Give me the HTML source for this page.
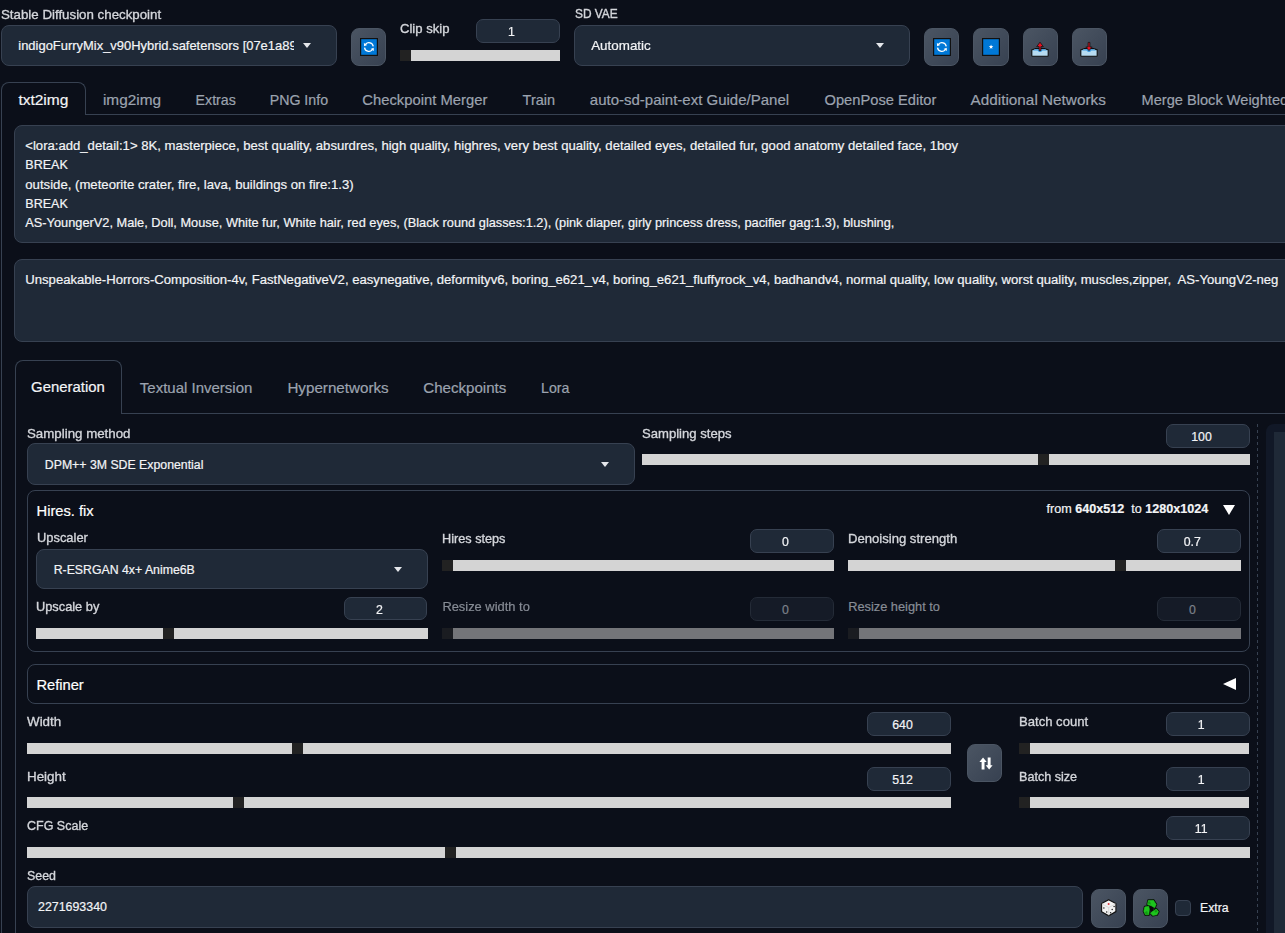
<!DOCTYPE html><html><head><meta charset="utf-8"><style>
html,body{margin:0;padding:0;}
body{width:1285px;height:933px;overflow:hidden;background:#0b0f19;position:relative;font-family:"Liberation Sans",sans-serif;}
.t{position:absolute;white-space:nowrap;line-height:1;-webkit-text-stroke:0.2px currentColor;}
.lb{-webkit-text-stroke:0.35px #d4d6db;will-change:transform;}
.b{position:absolute;box-sizing:border-box;}
.btn{position:absolute;box-sizing:border-box;border-radius:8px;background:linear-gradient(to bottom right,#4b5563,#374151);border:1px solid #4b5563;}
</style></head><body>

<div class="t lb" style="left:1.0px;top:7.7px;font-size:13.3px;color:#d4d6db;font-weight:normal;">Stable Diffusion checkpoint</div>
<div class="b" style="left:1.0px;top:25.0px;width:336.0px;height:41.0px;background:#1f2937;border:1px solid #374151;border-radius:8px;"></div>
<div class="t" style="left:18.3px;top:39.5px;font-size:12.95px;color:#f3f4f6;font-weight:normal;width:275.7px;overflow:hidden;padding-bottom:4px;white-space:nowrap;">indigoFurryMix_v90Hybrid.safetensors [07e1a89c8e]</div>
<div class="b" style="left:303px;top:43.0px;width:0;height:0;border-left:4.0px solid transparent;border-right:4.0px solid transparent;border-top:5px solid #e5e7eb"></div>
<div class="btn" style="left:351.0px;top:28.0px;width:35.0px;height:38.0px"></div>
<svg class="b" style="left:359.5px;top:38.2px" width="18" height="18" viewBox="0 0 18 18"><rect x="0.6" y="0.6" width="16.8" height="16.8" fill="#0078d7" stroke="#111" stroke-width="1.2"/><path d="M5.63 6.06 A4.4 4.4 0 0 1 13.26 8.39 M12.17 11.94 A4.4 4.4 0 0 1 4.54 9.61" fill="none" stroke="#fff" stroke-width="1.3"/><path d="M4.11 8.36 L3.90 4.93 L7.29 7.05 Z M13.69 9.64 L13.90 13.07 L10.51 10.95 Z" fill="#fff"/></svg>
<div class="t lb" style="left:400.0px;top:21.7px;font-size:13.1px;color:#d4d6db;font-weight:normal;">Clip skip</div>
<div class="b" style="left:476.0px;top:19.0px;width:84.0px;height:23.7px;background:#1f2937;border:1px solid #374151;border-radius:7px;"></div>
<div class="t" style="left:469.5px;width:84.0px;text-align:center;top:25.7px;font-size:12.3px;color:#f3f4f6">1</div>
<div class="b" style="left:400.0px;top:50.0px;width:160.0px;height:11.0px;background:#d4d4d4;"></div>
<div class="b" style="left:400.0px;top:50.0px;width:11.0px;height:11.0px;background:#222222;"></div>
<div class="t lb" style="left:574.5px;top:8.9px;font-size:11.9px;color:#d4d6db;font-weight:normal;">SD VAE</div>
<div class="b" style="left:574.0px;top:25.0px;width:336.0px;height:41.0px;background:#1f2937;border:1px solid #374151;border-radius:8px;"></div>
<div class="t" style="left:591.2px;top:39.2px;font-size:13.4px;color:#f3f4f6;font-weight:normal;white-space:nowrap;">Automatic</div>
<div class="b" style="left:876px;top:43.0px;width:0;height:0;border-left:4.0px solid transparent;border-right:4.0px solid transparent;border-top:5px solid #e5e7eb"></div>
<div class="btn" style="left:924.0px;top:28.0px;width:35.0px;height:38.0px"></div>
<svg class="b" style="left:932.9px;top:38.2px" width="18" height="18" viewBox="0 0 18 18"><rect x="0.6" y="0.6" width="16.8" height="16.8" fill="#0078d7" stroke="#111" stroke-width="1.2"/><path d="M5.63 6.06 A4.4 4.4 0 0 1 13.26 8.39 M12.17 11.94 A4.4 4.4 0 0 1 4.54 9.61" fill="none" stroke="#fff" stroke-width="1.3"/><path d="M4.11 8.36 L3.90 4.93 L7.29 7.05 Z M13.69 9.64 L13.90 13.07 L10.51 10.95 Z" fill="#fff"/></svg>
<div class="btn" style="left:973.0px;top:28.0px;width:36.0px;height:38.0px"></div>
<svg class="b" style="left:981.9px;top:38.1px" width="18" height="18" viewBox="0 0 18 18"><rect x="0.6" y="0.6" width="16.8" height="16.8" fill="#0078d7" stroke="#111" stroke-width="1.2"/><path d="M9.05 6.50 L9.64 8.09 L11.33 8.16 L10.00 9.21 L10.46 10.84 L9.05 9.90 L7.64 10.84 L8.10 9.21 L6.77 8.16 L8.46 8.09 Z" fill="#fff"/></svg>
<div class="btn" style="left:1023.0px;top:28.0px;width:35.0px;height:38.0px"></div>
<svg class="b" style="left:1030.6px;top:39.6px" width="18" height="17" viewBox="0 0 18 17"><path d="M0.8 10 L4.4 8.6 L13.6 8.6 L17.2 10 L17.2 15.4 Q17.2 16.2 16.4 16.2 L1.6 16.2 Q0.8 16.2 0.8 15.4 Z" fill="#b7dcf2" stroke="#0d0d0d" stroke-width="1.1"/><path d="M1.6 10.4 L4.6 9.2 L13.4 9.2 L16.4 10.4 L11.5 10.4 Q9 13.4 6.5 10.4 Z" fill="#3d9be0"/><path d="M9 2.2 L12.3 6.6 L9.9 6.6 L9.9 10.6 L8.1 10.6 L8.1 6.6 L5.7 6.6 Z" fill="#e81123" stroke="#111" stroke-width="0.8"/></svg>
<div class="btn" style="left:1072.0px;top:28.0px;width:35.0px;height:38.0px"></div>
<svg class="b" style="left:1079.6px;top:39.6px" width="18" height="17" viewBox="0 0 18 17"><path d="M0.8 10 L4.4 8.6 L13.6 8.6 L17.2 10 L17.2 15.4 Q17.2 16.2 16.4 16.2 L1.6 16.2 Q0.8 16.2 0.8 15.4 Z" fill="#b7dcf2" stroke="#0d0d0d" stroke-width="1.1"/><path d="M1.6 10.4 L4.6 9.2 L13.4 9.2 L16.4 10.4 L11.5 10.4 Q9 13.4 6.5 10.4 Z" fill="#3d9be0"/><path d="M8.1 2.4 L9.9 2.4 L9.9 7 L12.2 7 L9 10.6 L5.8 7 L8.1 7 Z" fill="#e81123" stroke="#111" stroke-width="0.8"/></svg>
<div class="b" style="left:1px;top:82px;width:85px;height:33px;border:1px solid #374151;border-bottom:none;border-radius:8px 8px 0 0;background:#0b0f19"></div>
<div class="b" style="left:86.0px;top:114.0px;width:1199.0px;height:1.0px;background:#374151;"></div>
<div class="b" style="left:1.0px;top:114.0px;width:1.0px;height:819.0px;background:#374151;"></div>
<div class="t" style="left:18.4px;top:92.0px;font-size:15.5px;color:#f3f4f6;font-weight:normal;">txt2img</div>
<div class="t" style="left:102.9px;top:92.1px;font-size:15.4px;color:#9ca3af;font-weight:normal;">img2img</div>
<div class="t" style="left:195.6px;top:93.1px;font-size:14.2px;color:#9ca3af;font-weight:normal;">Extras</div>
<div class="t" style="left:269.7px;top:93.1px;font-size:14.2px;color:#9ca3af;font-weight:normal;">PNG Info</div>
<div class="t" style="left:362.3px;top:92.6px;font-size:14.8px;color:#9ca3af;font-weight:normal;">Checkpoint Merger</div>
<div class="t" style="left:522.6px;top:92.8px;font-size:14.5px;color:#9ca3af;font-weight:normal;">Train</div>
<div class="t" style="left:589.8px;top:92.4px;font-size:15.0px;color:#9ca3af;font-weight:normal;">auto-sd-paint-ext Guide/Panel</div>
<div class="t" style="left:824.5px;top:92.7px;font-size:14.7px;color:#9ca3af;font-weight:normal;">OpenPose Editor</div>
<div class="t" style="left:970.6px;top:92.1px;font-size:15.3px;color:#9ca3af;font-weight:normal;">Additional Networks</div>
<div class="t" style="left:1141.6px;top:92.7px;font-size:14.6px;color:#9ca3af;font-weight:normal;">Merge Block Weighted</div>
<div class="b" style="left:14.0px;top:125.0px;width:1286.0px;height:117.6px;background:#1f2937;border:1px solid #374151;border-radius:8px;"></div>
<div class="t" style="left:25.3px;top:139.1px;font-size:13.12px;color:#f3f4f6;font-weight:normal;">&lt;lora:add_detail:1&gt; 8K, masterpiece, best quality, absurdres, high quality, highres, very best quality, detailed eyes, detailed fur, good anatomy detailed face, 1boy</div>
<div class="t" style="left:25.3px;top:159.0px;font-size:12.54px;color:#f3f4f6;font-weight:normal;">BREAK</div>
<div class="t" style="left:25.3px;top:178.0px;font-size:13.17px;color:#f3f4f6;font-weight:normal;">outside, (meteorite crater, fire, lava, buildings on fire:1.3)</div>
<div class="t" style="left:25.3px;top:197.9px;font-size:12.54px;color:#f3f4f6;font-weight:normal;">BREAK</div>
<div class="t" style="left:25.3px;top:217.2px;font-size:12.79px;color:#f3f4f6;font-weight:normal;">AS-YoungerV2, Male, Doll, Mouse, White fur, White hair, red eyes, (Black round glasses:1.2), (pink diaper, girly princess dress, pacifier gag:1.3), blushing,</div>
<div class="b" style="left:14.0px;top:259.0px;width:1286.0px;height:83.3px;background:#1f2937;border:1px solid #374151;border-radius:8px;"></div>
<div class="t" style="left:25.3px;top:273.2px;font-size:13.11px;color:#f3f4f6;font-weight:normal;">Unspeakable-Horrors-Composition-4v, FastNegativeV2, easynegative, deformityv6, boring_e621_v4, boring_e621_fluffyrock_v4, badhandv4, normal quality, low quality, worst quality, muscles,zipper,&nbsp; AS-YoungV2-neg</div>
<div class="b" style="left:14.5px;top:359.5px;width:107.5px;height:54px;border:1px solid #374151;border-bottom:none;border-radius:8px 8px 0 0;background:#0b0f19"></div>
<div class="b" style="left:121.5px;top:412.5px;width:1163.5px;height:1.0px;background:#374151;"></div>
<div class="b" style="left:14.5px;top:412.5px;width:1.0px;height:520.5px;background:#374151;"></div>
<div class="t" style="left:31.1px;top:380.3px;font-size:14.9px;color:#f3f4f6;font-weight:normal;">Generation</div>
<div class="t" style="left:139.8px;top:380.2px;font-size:15.0px;color:#9ca3af;font-weight:normal;">Textual Inversion</div>
<div class="t" style="left:287.4px;top:380.0px;font-size:15.2px;color:#9ca3af;font-weight:normal;">Hypernetworks</div>
<div class="t" style="left:423.3px;top:380.1px;font-size:15.1px;color:#9ca3af;font-weight:normal;">Checkpoints</div>
<div class="t" style="left:541.0px;top:380.9px;font-size:14.2px;color:#9ca3af;font-weight:normal;">Lora</div>
<div class="t lb" style="left:27.0px;top:426.7px;font-size:13.3px;color:#d4d6db;font-weight:normal;">Sampling method</div>
<div class="b" style="left:27.0px;top:443.0px;width:608.0px;height:42.0px;background:#1f2937;border:1px solid #374151;border-radius:8px;"></div>
<div class="t" style="left:44.8px;top:458.6px;font-size:12.3px;color:#f3f4f6;font-weight:normal;white-space:nowrap;">DPM++ 3M SDE Exponential</div>
<div class="b" style="left:600.6px;top:461.5px;width:0;height:0;border-left:4.0px solid transparent;border-right:4.0px solid transparent;border-top:5px solid #e5e7eb"></div>
<div class="t lb" style="left:642.0px;top:426.9px;font-size:13.1px;color:#d4d6db;font-weight:normal;">Sampling steps</div>
<div class="b" style="left:1166.0px;top:424.0px;width:84.0px;height:24.0px;background:#1f2937;border:1px solid #374151;border-radius:7px;"></div>
<div class="t" style="left:1159.5px;width:84.0px;text-align:center;top:430.9px;font-size:12.3px;color:#f3f4f6">100</div>
<div class="b" style="left:642.0px;top:454.0px;width:608.0px;height:11.0px;background:#d4d4d4;"></div>
<div class="b" style="left:1038.0px;top:454.0px;width:11.0px;height:11.0px;background:#222222;"></div>
<div class="b" style="left:1257px;top:424px;width:1px;height:509px;background:repeating-linear-gradient(to bottom,#374151 0 3px,transparent 3px 6px)"></div>
<div class="b" style="left:1266px;top:424px;width:30px;height:520px;background:#111827;border-radius:8px 0 0 0"></div>
<div class="b" style="left:1274.0px;top:432.0px;width:11.0px;height:501.0px;background:#1f2937;"></div>
<div class="b" style="left:27.3px;top:490.4px;width:1222.7px;height:161.6px;background:transparent;border:1px solid #374151;border-radius:8px;"></div>
<div class="t" style="left:36.6px;top:504.2px;font-size:14.7px;color:#ffffff;font-weight:normal;">Hires. fix</div>
<div class="t" style="left:1046.5px;top:503.1px;font-size:12.6px;color:#f3f4f6;font-weight:normal;">from <b>640x512</b>&nbsp; to <b>1280x1024</b></div>
<div class="b" style="left:1223px;top:505px;width:0;height:0;border-left:6.5px solid transparent;border-right:6.5px solid transparent;border-top:10px solid #ffffff"></div>
<div class="t lb" style="left:36.5px;top:532.1px;font-size:12.9px;color:#d4d6db;font-weight:normal;">Upscaler</div>
<div class="b" style="left:36.0px;top:549.4px;width:391.5px;height:39.8px;background:#1f2937;border:1px solid #374151;border-radius:8px;"></div>
<div class="t" style="left:53.7px;top:563.9px;font-size:12.3px;color:#f3f4f6;font-weight:normal;white-space:nowrap;">R-ESRGAN 4x+ Anime6B</div>
<div class="b" style="left:394px;top:566.8px;width:0;height:0;border-left:4.0px solid transparent;border-right:4.0px solid transparent;border-top:5px solid #e5e7eb"></div>
<div class="t lb" style="left:36.3px;top:600.7px;font-size:12.8px;color:#d4d6db;font-weight:normal;">Upscale by</div>
<div class="b" style="left:344.3px;top:597.0px;width:83.2px;height:23.4px;background:#1f2937;border:1px solid #374151;border-radius:7px;"></div>
<div class="t" style="left:337.8px;width:83.2px;text-align:center;top:603.6px;font-size:12.3px;color:#f3f4f6">2</div>
<div class="b" style="left:36.0px;top:628.0px;width:391.5px;height:11.0px;background:#d4d4d4;"></div>
<div class="b" style="left:163.2px;top:628.0px;width:11.0px;height:11.0px;background:#222222;"></div>
<div class="t lb" style="left:442.4px;top:532.5px;font-size:12.7px;color:#d4d6db;font-weight:normal;">Hires steps</div>
<div class="b" style="left:750.3px;top:529.2px;width:83.3px;height:23.5px;background:#1f2937;border:1px solid #374151;border-radius:7px;"></div>
<div class="t" style="left:743.8px;width:83.3px;text-align:center;top:535.8px;font-size:12.3px;color:#f3f4f6">0</div>
<div class="b" style="left:442.4px;top:559.7px;width:391.2px;height:11.0px;background:#d4d4d4;"></div>
<div class="b" style="left:442.4px;top:559.7px;width:11.0px;height:11.0px;background:#222222;"></div>
<div class="t" style="left:442.4px;top:600.6px;font-size:12.9px;color:#878c95;font-weight:normal;">Resize width to</div>
<div class="b" style="left:750.3px;top:597.2px;width:83.3px;height:23.5px;background:#151b27;border:1px solid #242b37;border-radius:7px;"></div>
<div class="t" style="left:743.8px;width:83.3px;text-align:center;top:603.8px;font-size:12.3px;color:#7c818a">0</div>
<div class="b" style="left:442.4px;top:628.0px;width:391.2px;height:11.0px;background:#747579;"></div>
<div class="b" style="left:442.4px;top:628.0px;width:11.0px;height:11.0px;background:#1a1c21;"></div>
<div class="t lb" style="left:848.2px;top:532.2px;font-size:13.1px;color:#d4d6db;font-weight:normal;">Denoising strength</div>
<div class="b" style="left:1157.0px;top:529.2px;width:83.7px;height:23.5px;background:#1f2937;border:1px solid #374151;border-radius:7px;"></div>
<div class="t" style="left:1150.5px;width:83.7px;text-align:center;top:535.8px;font-size:12.3px;color:#f3f4f6">0.7</div>
<div class="b" style="left:848.2px;top:559.7px;width:392.5px;height:11.0px;background:#d4d4d4;"></div>
<div class="b" style="left:1115.2px;top:559.7px;width:11.0px;height:11.0px;background:#222222;"></div>
<div class="t" style="left:848.2px;top:600.7px;font-size:12.8px;color:#878c95;font-weight:normal;">Resize height to</div>
<div class="b" style="left:1157.0px;top:597.2px;width:83.7px;height:23.5px;background:#151b27;border:1px solid #242b37;border-radius:7px;"></div>
<div class="t" style="left:1150.5px;width:83.7px;text-align:center;top:603.8px;font-size:12.3px;color:#7c818a">0</div>
<div class="b" style="left:848.2px;top:628.0px;width:392.5px;height:11.0px;background:#747579;"></div>
<div class="b" style="left:848.2px;top:628.0px;width:11.0px;height:11.0px;background:#1a1c21;"></div>
<div class="b" style="left:27.3px;top:664.2px;width:1222.7px;height:40.2px;background:transparent;border:1px solid #374151;border-radius:8px;"></div>
<div class="t" style="left:36.4px;top:677.9px;font-size:14.7px;color:#ffffff;font-weight:normal;">Refiner</div>
<div class="b" style="left:1223px;top:678px;width:0;height:0;border-top:6.5px solid transparent;border-bottom:6.5px solid transparent;border-right:13px solid #ffffff"></div>
<div class="t lb" style="left:26.8px;top:715.0px;font-size:13.4px;color:#d4d6db;font-weight:normal;">Width</div>
<div class="b" style="left:867.2px;top:712.0px;width:83.6px;height:23.6px;background:#1f2937;border:1px solid #374151;border-radius:7px;"></div>
<div class="t" style="left:860.7px;width:83.6px;text-align:center;top:718.7px;font-size:12.3px;color:#f3f4f6">640</div>
<div class="b" style="left:27.0px;top:743.0px;width:923.8px;height:11.0px;background:#d4d4d4;"></div>
<div class="b" style="left:292.3px;top:743.0px;width:11.0px;height:11.0px;background:#222222;"></div>
<div class="t lb" style="left:27.0px;top:769.7px;font-size:13.4px;color:#d4d6db;font-weight:normal;">Height</div>
<div class="b" style="left:867.2px;top:767.0px;width:83.6px;height:23.7px;background:#1f2937;border:1px solid #374151;border-radius:7px;"></div>
<div class="t" style="left:860.7px;width:83.6px;text-align:center;top:773.7px;font-size:12.3px;color:#f3f4f6">512</div>
<div class="b" style="left:27.0px;top:797.0px;width:923.8px;height:11.0px;background:#d4d4d4;"></div>
<div class="b" style="left:233.2px;top:797.0px;width:11.0px;height:11.0px;background:#222222;"></div>
<div class="btn" style="left:966.8px;top:743.8px;width:35.2px;height:37.9px"></div>
<svg class="b" style="left:978.5px;top:756.5px" width="14" height="13" viewBox="0 0 14 13"><path d="M4.05 0.6 L7.7 4.9 L5.5 4.9 L5.5 12.4 L2.6 12.4 L2.6 4.9 L0.4 4.9 Z M8.7 0.6 L11.6 0.6 L11.6 8.3 L13.6 8.3 L10.15 12.4 L6.7 8.3 L8.7 8.3 Z" fill="#fff"/></svg>
<div class="t lb" style="left:1018.7px;top:715.2px;font-size:13.1px;color:#d4d6db;font-weight:normal;">Batch count</div>
<div class="b" style="left:1166.0px;top:712.0px;width:83.5px;height:23.6px;background:#1f2937;border:1px solid #374151;border-radius:7px;"></div>
<div class="t" style="left:1159.5px;width:83.5px;text-align:center;top:718.7px;font-size:12.3px;color:#f3f4f6">1</div>
<div class="b" style="left:1018.7px;top:743.0px;width:230.8px;height:11.0px;background:#d4d4d4;"></div>
<div class="b" style="left:1018.7px;top:743.0px;width:11.0px;height:11.0px;background:#222222;"></div>
<div class="t lb" style="left:1018.7px;top:771.1px;font-size:12.6px;color:#d4d6db;font-weight:normal;">Batch size</div>
<div class="b" style="left:1166.0px;top:767.0px;width:83.5px;height:23.7px;background:#1f2937;border:1px solid #374151;border-radius:7px;"></div>
<div class="t" style="left:1159.5px;width:83.5px;text-align:center;top:773.7px;font-size:12.3px;color:#f3f4f6">1</div>
<div class="b" style="left:1018.7px;top:797.0px;width:230.8px;height:11.0px;background:#d4d4d4;"></div>
<div class="b" style="left:1018.7px;top:797.0px;width:11.0px;height:11.0px;background:#222222;"></div>
<div class="t lb" style="left:27.0px;top:819.8px;font-size:12.5px;color:#d4d6db;font-weight:normal;">CFG Scale</div>
<div class="b" style="left:1166.0px;top:816.0px;width:83.5px;height:23.6px;background:#1f2937;border:1px solid #374151;border-radius:7px;"></div>
<div class="t" style="left:1159.5px;width:83.5px;text-align:center;top:822.7px;font-size:12.3px;color:#f3f4f6">11</div>
<div class="b" style="left:27.0px;top:847.0px;width:1222.5px;height:11.0px;background:#d4d4d4;"></div>
<div class="b" style="left:445.0px;top:847.0px;width:11.0px;height:11.0px;background:#222222;"></div>
<div class="t lb" style="left:27.0px;top:869.7px;font-size:12.4px;color:#d4d6db;font-weight:normal;">Seed</div>
<div class="b" style="left:27.0px;top:886.3px;width:1056.0px;height:41.3px;background:#1f2937;border:1px solid #374151;border-radius:8px;"></div>
<div class="t" style="left:38.0px;top:900.5px;font-size:12.4px;color:#f3f4f6;font-weight:normal;">2271693340</div>
<div class="btn" style="left:1091.0px;top:889.0px;width:35.0px;height:38.7px"></div>
<svg class="b" style="left:1100.7px;top:899.4px" width="16" height="18" viewBox="0 0 16 18"><path d="M7.7 0.7 L14.9 4.6 L14.9 12.6 L7.7 16.8 L0.6 12.6 L0.6 4.6 Z" fill="#f2f2f2" stroke="#111" stroke-width="1.1"/><path d="M0.9 4.8 L7.7 8.6 L14.6 4.8 M7.7 8.6 L7.7 16.5" fill="none" stroke="#c9c9c9" stroke-width="0.6"/><circle cx="7.6" cy="4.9" r="1" fill="#d9363e"/><circle cx="2.9" cy="8.9" r="0.75" fill="#222"/><circle cx="5.7" cy="12.9" r="0.75" fill="#222"/><circle cx="13.1" cy="7.6" r="0.75" fill="#222"/><circle cx="11.2" cy="10.6" r="0.75" fill="#222"/><circle cx="9.6" cy="13.7" r="0.75" fill="#222"/></svg>
<div class="btn" style="left:1133.0px;top:889.0px;width:35.0px;height:38.7px"></div>
<svg class="b" style="left:1140.0px;top:897.0px" width="22" height="22" viewBox="0 0 22 22"><path d="M8.3 3.4 L13.4 3.2 L16.2 7.5 L14.6 10.8 L11.3 8.8 L7.5 7.4 Z M4.8 9.9 L8.7 9.2 L9.4 12.3 L8.7 17.8 L5.4 17.8 L3.8 14.2 Z M10.4 16 L13.7 13.7 L16.3 12 L18.5 14.6 L17 17.7 L12.7 18.5 Z" fill="#0a0a0a" stroke="#0a0a0a" stroke-width="2.2" stroke-linejoin="round"/><path d="M9 8.6 L14 10.4 L12.6 14.6 L9.4 13.6 Z" fill="#0a0a0a"/><path d="M8.3 3.4 L13.4 3.2 L16.2 7.5 L14.6 10.8 L11.3 8.8 L7.5 7.4 Z M4.8 9.9 L8.7 9.2 L9.4 12.3 L8.7 17.8 L5.4 17.8 L3.8 14.2 Z M10.4 16 L13.7 13.7 L16.3 12 L18.5 14.6 L17 17.7 L12.7 18.5 Z" fill="#1ec41e" stroke="#1ec41e" stroke-width="0.6" stroke-linejoin="round"/><path d="M8 5 L10 4.2 L11 7.6 L8.2 6.8 Z M5 15 L7.2 14 L8 17.4 L5.6 17.4 Z M14.6 13.6 L16.6 12.8 L17.2 15 L15 15.6 Z" fill="#129a12"/></svg>
<div class="b" style="left:1175.0px;top:900.0px;width:16.0px;height:16.0px;background:#1f2937;border:1px solid #374151;border-radius:4px;"></div>
<div class="t" style="left:1200.0px;top:901.9px;font-size:12.3px;color:#f3f4f6;font-weight:normal;">Extra</div>
</body></html>
